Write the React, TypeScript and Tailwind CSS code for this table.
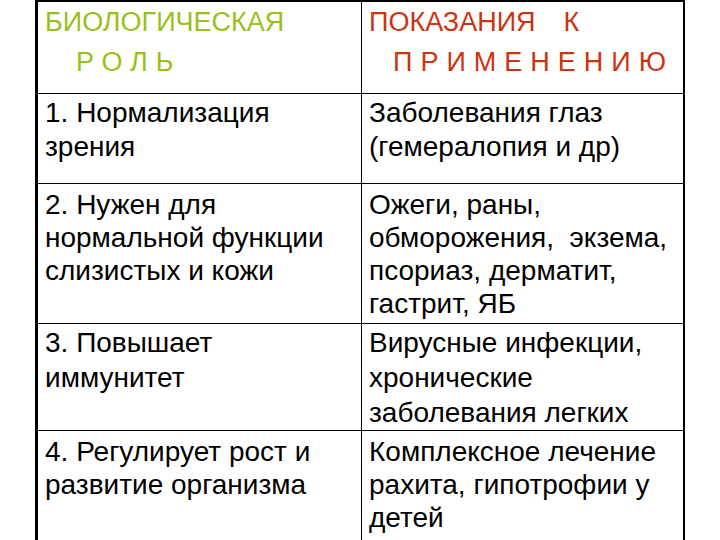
import React from "react";

const rows: { h: string; pt: string; left: string[]; right: string[]; lh: string }[] = [
  {
    h: "h-[90px]",
    pt: "pt-[2px]",
    lh: "leading-[34px]",
    left: ["1. Нормализация", "зрения"],
    right: ["Заболевания глаз", "(гемералопия и др)"],
  },
  {
    h: "h-[140px]",
    pt: "pt-[4px]",
    lh: "leading-[33px]",
    left: ["2. Нужен для", "нормальной функции", "слизистых и кожи"],
    right: ["Ожеги, раны,", "обморожения,  экзема,", "псориаз, дерматит,", "гастрит, ЯБ"],
  },
  {
    h: "h-[107px]",
    pt: "pt-[1px]",
    lh: "leading-[35px]",
    left: ["3. Повышает", "иммунитет"],
    right: ["Вирусные инфекции,", "хронические", "заболевания легких"],
  },
  {
    h: "h-[130px]",
    pt: "pt-[4px]",
    lh: "leading-[33px]",
    left: ["4. Регулирует рост и", "развитие организма"],
    right: ["Комплексное лечение", "рахита, гипотрофии у", "детей"],
  },
];

export default function App() {
  return (
    <div
      className="w-[720px] h-[540px] bg-white overflow-hidden"
      style={{ fontFamily: '"Liberation Sans", Arial, sans-serif' }}
    >
      <div className="ml-[35px] w-[650px] border-l-[3px] border-r-2 border-t-2 border-black">
        <div className="flex h-[92px] border-b border-black">
          <div className="w-[323px] pl-[7px] pt-0 text-[27px] leading-[40px] text-[#99c01a]">
            <div>БИОЛОГИЧЕСКАЯ</div>
            <div className="pl-[31px] tracking-[8px]">РОЛЬ</div>
          </div>
          <div className="flex-1 border-l border-black pl-[7px] pt-0 text-[27px] leading-[40px] text-[#cc3311]">
            <div>
              ПОКАЗАНИЯ<span className="ml-[28px]">К</span>
            </div>
            <div className="pl-[24px] tracking-[8px]">ПРИМЕНЕНИЮ</div>
          </div>
        </div>
        {rows.map((r, i) => (
          <div
            key={i}
            className={`flex ${r.h} ${i < rows.length - 1 ? "border-b border-black" : ""}`}
          >
            <div className={`w-[323px] pl-[7px] ${r.pt} text-[28px] ${r.lh} text-black`}>
              {r.left.map((t, j) => (
                <div key={j} className="whitespace-pre">{t}</div>
              ))}
            </div>
            <div className={`flex-1 border-l border-black pl-[7px] ${r.pt} text-[28px] ${r.lh} text-black`}>
              {r.right.map((t, j) => (
                <div key={j} className="whitespace-pre">{t}</div>
              ))}
            </div>
          </div>
        ))}
      </div>
    </div>
  );
}
